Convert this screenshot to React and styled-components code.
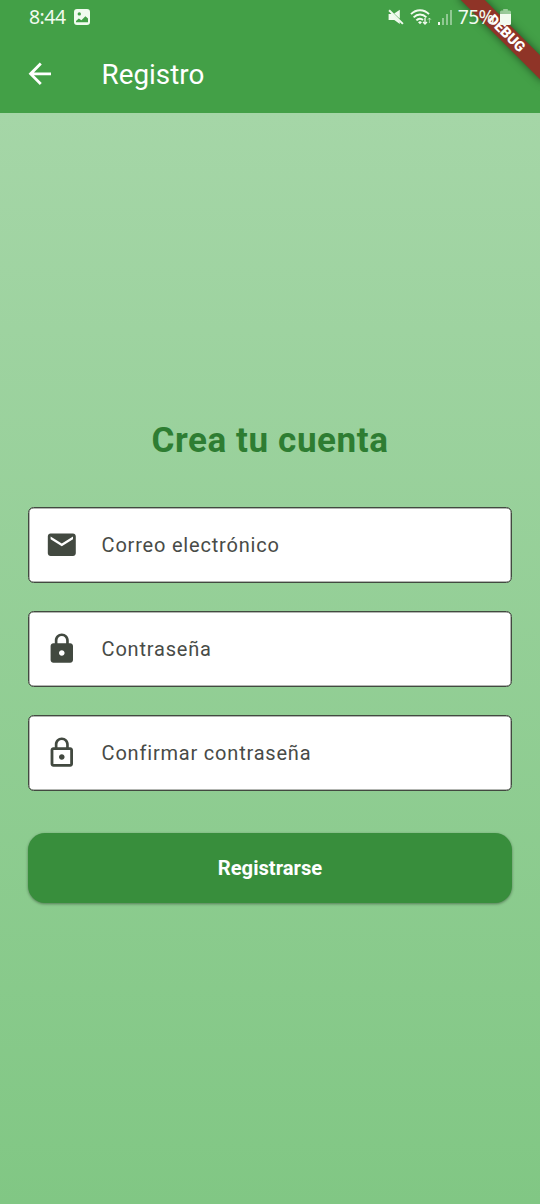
import React from 'react'
import styled, { createGlobalStyle } from 'styled-components'

const GlobalStyle = createGlobalStyle`
  * {
    box-sizing: border-box;
  }
  body {
    margin: 0;
    font-family: Roboto, "Liberation Sans", sans-serif;
  }
`

const Screen = styled.div`
  position: relative;
  display: flex;
  flex-direction: column;
  width: 540px;
  height: 1204px;
  overflow: hidden;
`

const Header = styled.header`
  height: 113px;
  background: #43a047;
  color: white;
`

// the system bar is painted over the debug banner
const StatusBar = styled.div`
  position: relative;
  z-index: 1;
  display: flex;
  align-items: center;
  justify-content: space-between;
  height: 35px;
  padding: 0 29px 1px;
  font-family: "Noto Sans", sans-serif;
`

const StatusGroup = styled.div`
  display: flex;
  align-items: center;
  gap: ${(props) => props.$gap}px;
  color: #f1fbef;
  svg {
    display: block;
  }
`

const StatusText = styled.span`
  font-size: 19.4px;
  letter-spacing: ${(props) => props.$tracking}px;
  line-height: 34px;
`

const Toolbar = styled.div`
  display: flex;
  align-items: center;
  gap: 45px;
  height: 78px;
  padding: 0 23px;
`

const ToolbarTitle = styled.h1`
  margin: 1px 0 0;
  font-size: 27.8px;
  font-weight: 400;
  line-height: 36px;
`

const Body = styled.main`
  display: flex;
  flex: 1;
  flex-direction: column;
  justify-content: center;
  padding: 0 28px;
  background: linear-gradient(180deg, #a5d6a7, #81c784);
`

const Heading = styled.h2`
  margin: 3px 0 42px;
  color: #2e7d32;
  font-size: 35px;
  font-weight: 700;
  letter-spacing: 0.6px;
  line-height: 48px;
  text-align: center;
`

const Form = styled.form`
  display: flex;
  flex-direction: column;
  gap: 28px;
`

const Field = styled.label`
  display: flex;
  align-items: center;
  gap: 23px;
  height: 76px;
  padding: 0 16px;
  border: 1px solid #424940;
  border-radius: 5.6px;
  background: white;
  box-shadow: inset 0 0 0 0.5px rgba(66, 73, 64, 0.8);
  color: #424940;
`

const FieldLabel = styled.span`
  color: #484b47;
  font-size: 20px;
  letter-spacing: 0.8px;
  line-height: 28px;
`

const SubmitButton = styled.button`
  height: 70px;
  margin-top: 14px;
  border: 0;
  border-radius: 17px;
  background: #388e3c;
  box-shadow: 0 1px 3px rgba(0, 0, 0, 0.4);
  color: white;
  font-family: inherit;
  font-size: 20.2px;
  font-weight: 700;
`

const BannerCorner = styled.div`
  position: absolute;
  top: 0;
  right: 0;
  width: 0;
  height: 0;
  transform: rotate(45deg);
`

const BannerStrip = styled.div`
  position: absolute;
  top: 39.2px;
  left: -60px;
  width: 120px;
  height: 16.8px;
  background: #8f3427;
  box-shadow: 0 0 8px rgba(0, 0, 0, 0.5);
  color: white;
  font-size: 14.3px;
  font-weight: 900;
  line-height: 16.8px;
  text-align: center;
`

const icons = {
  back: 'M20 11H7.83l5.59-5.59L12 4l-8 8 8 8 1.41-1.41L7.83 13H20v-2z',
  mail: 'M20 4H4c-1.1 0-1.99.9-1.99 2L2 18c0 1.1.9 2 2 2h16c1.1 0 2-.9 2-2V6c0-1.1-.9-2-2-2zm0 4l-8 5-8-5V6l8 5 8-5v2z',
  lock: 'M18 8h-1V6c0-2.76-2.24-5-5-5S7 3.24 7 6v2H6c-1.1 0-2 .9-2 2v10c0 1.1.9 2 2 2h12c1.1 0 2-.9 2-2V10c0-1.1-.9-2-2-2zm-6 9c-1.1 0-2-.9-2-2s.9-2 2-2 2 .9 2 2-.9 2-2 2zm3.1-9H8.9V6c0-1.71 1.39-3.1 3.1-3.1 1.71 0 3.1 1.39 3.1 3.1v2z',
  lockOutline:
    'M12 17c1.1 0 2-.9 2-2s-.9-2-2-2-2 .9-2 2 .9 2 2 2zm6-9h-1V6c0-2.76-2.24-5-5-5S7 3.24 7 6v2H6c-1.1 0-2 .9-2 2v10c0 1.1.9 2 2 2h12c1.1 0 2-.9 2-2V10c0-1.1-.9-2-2-2zM8.9 6c0-1.71 1.39-3.1 3.1-3.1s3.1 1.39 3.1 3.1v2H8.9V6zM18 20H6V10h12v10z',
}

const fields = [
  { icon: 'mail', label: 'Correo electrónico' },
  { icon: 'lock', label: 'Contraseña' },
  { icon: 'lockOutline', label: 'Confirmar contraseña' },
]

function Icon({ name }) {
  return (
    <svg width="33.6" height="33.6" viewBox="0 0 24 24" fill="currentColor">
      <path d={icons[name]} />
    </svg>
  )
}

function PictureIcon() {
  return (
    <svg width="16" height="16" viewBox="0 0 16 16">
      <path
        fill="currentColor"
        fillRule="evenodd"
        d="M3 0h10a3 3 0 0 1 3 3v10a3 3 0 0 1-3 3H3a3 3 0 0 1-3-3V3a3 3 0 0 1 3-3zM5.3 3.2a1.7 1.7 0 1 0 0 3.4 1.7 1.7 0 0 0 0-3.4zM2 13.2h12V9.6l-2.6-2.4-4 4-2.6-1.8L2 12z"
      />
    </svg>
  )
}

function MuteIcon() {
  return (
    <svg width="16" height="16" viewBox="0 0 16 16" fill="currentColor">
      <path d="M.6 5h3.6l7.6 7.4V15L6.3 11H.6z" />
      <path d="M6.2 4.6 11.8.8v9z" />
      <path d="M.4 2 1.8.6l13.8 13.6-1.4 1.4z" />
    </svg>
  )
}

function WifiIcon() {
  return (
    <svg width="22" height="16" viewBox="0 0 22 16" fill="none" stroke="currentColor">
      <path strokeWidth="1.9" d="M1 5.2C6-.1 14-.1 19 5.2M3.6 8.4c3.6-3.8 9.2-3.8 12.8 0M6.4 11.4c2-2.2 4.8-2.2 6.6-.4" />
      <path fill="currentColor" stroke="none" d="M8 13.2 10 12l2 1.2-2 2z" />
      <path strokeWidth="1.3" d="M15 9v6M13 13l2 2 2-2" />
      <path strokeWidth="1" opacity=".55" d="M19.4 14V9M17.8 10.8 19.4 9l1.6 1.8" />
    </svg>
  )
}

function SignalIcon() {
  return (
    <svg width="14" height="15" viewBox="0 0 14 15" fill="currentColor">
      <path d="M0 12h2v3H0z" />
      <path opacity=".45" d="M4 8h2v7H4zM8 4h2v11H8zM12 0h2v15h-2z" />
    </svg>
  )
}

function BatteryIcon() {
  return (
    <svg width="11" height="16" viewBox="0 0 11 16" fill="currentColor">
      <path opacity=".5" d="M3.2 0h4.6v1.5H9.5A1.5 1.5 0 0 1 11 3v2H0V3a1.5 1.5 0 0 1 1.5-1.5h1.7z" />
      <path d="M0 5h11v9.5a1.5 1.5 0 0 1-1.5 1.5h-8A1.5 1.5 0 0 1 0 14.5z" />
    </svg>
  )
}

function App() {
  return (
    <>
      <GlobalStyle />
      <Screen>
        <Header>
          <StatusBar>
            <StatusGroup $gap={8.5}>
              <StatusText $tracking={-0.5}>8:44</StatusText>
              <PictureIcon />
            </StatusGroup>
            <StatusGroup $gap={6}>
              <MuteIcon />
              <WifiIcon />
              <SignalIcon />
              <StatusText $tracking={-0.7}>75%</StatusText>
              <BatteryIcon />
            </StatusGroup>
          </StatusBar>
          <Toolbar>
            <Icon name="back" />
            <ToolbarTitle>Registro</ToolbarTitle>
          </Toolbar>
        </Header>
        <Body>
          <Heading>Crea tu cuenta</Heading>
          <Form>
            {fields.map((field) => (
              <Field key={field.label}>
                <Icon name={field.icon} />
                <FieldLabel>{field.label}</FieldLabel>
              </Field>
            ))}
            <SubmitButton type="button">Registrarse</SubmitButton>
          </Form>
        </Body>
        <BannerCorner>
          <BannerStrip>DEBUG</BannerStrip>
        </BannerCorner>
      </Screen>
    </>
  )
}

export default App
